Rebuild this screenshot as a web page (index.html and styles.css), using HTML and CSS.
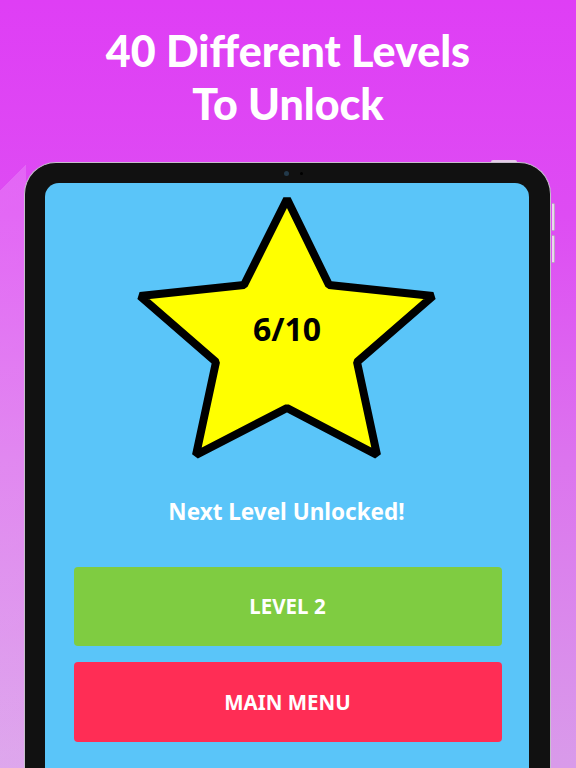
FILE: index.html
```html
<!DOCTYPE html>
<html lang="en">
<head>
    <meta charset="UTF-8">
    <meta name="viewport" content="width=device-width, initial-scale=1.0">
    <title>Levels</title>
    <link rel="stylesheet" href="styles.css">
</head>
<body>
    <h1 class="headline">40 Different Levels<br>To Unlock</h1>

    <div class="tablet">
        <span class="cam"></span>
        <span class="cam-dot"></span>
        <span class="btn-top"></span>
        <span class="btn-side one"></span>
        <span class="btn-side two"></span>

        <div class="screen">
            <svg class="star" width="310" height="275" viewBox="0 0 310 275">
                <polygon points="154,10 196,96 300,107 224,173 244,266 154,219 63,266 83,173 7,107 111,96"
                         fill="#ffff00" stroke="#000" stroke-width="8" stroke-linejoin="bevel"/>
                <text x="154" y="152" text-anchor="middle" class="score">6/10</text>
            </svg>

            <p class="unlocked">Next Level Unlocked!</p>

            <div class="actions">
                <button class="btn green">LEVEL 2</button>
                <button class="btn red">MAIN MENU</button>
            </div>
        </div>
    </div>
</body>
</html>
```

FILE: styles.css
```css
html, body{
    height: 100%;
    overflow: hidden;
}
body{
    margin: 0;
    background:
        linear-gradient(135deg, transparent 24%, rgba(255,255,255,0.16) 24%, rgba(255,255,255,0.12) 100%) left top / 26px 100% no-repeat,
        linear-gradient(180deg, #df3ef5 0%, #de4cf3 28%, #dc74ee 60%, #d99bea 100%);
    font-family: "Noto Sans", "Open Sans", sans-serif;
}
.headline{
    margin: 0;
    padding-top: 24px;
    text-align: center;
    color: #fff;
    font-family: "Lato", sans-serif;
    font-weight: 900;
    font-size: 43px;
    line-height: 53px;
}

/* device frame */
.tablet{
    position: relative;
    box-sizing: border-box;
    width: 527px;
    height: 620px;
    margin: 32px 0 0 24px;
    padding: 19.5px 21.5px 0 19.5px;
    background: #111;
    border: 1.5px solid #c6bfcc;
    border-bottom: none;
    border-radius: 32px 32px 0 0;
}
.cam{
    position: absolute;
    top: 8px;
    left: 259px;
    width: 5px;
    height: 5px;
    border-radius: 50%;
    background: #22394a;
}
.cam-dot{
    position: absolute;
    top: 9px;
    left: 275px;
    width: 3px;
    height: 3px;
    border-radius: 50%;
    background: #000;
}
.btn-top{
    position: absolute;
    top: -3.5px;
    left: 466px;
    width: 26px;
    height: 2px;
    background: #e6cbe9;
    border-radius: 2px 2px 0 0;
}
.btn-side{
    position: absolute;
    right: -4.5px;
    width: 2px;
    background: #ecd6ef;
    border: 1px solid #b7aebd;
    border-left: none;
    border-radius: 0 2px 2px 0;
}
.btn-side.one{
    top: 40px;
    height: 26px;
}
.btn-side.two{
    top: 72px;
    height: 26px;
}

.screen{
    height: 100%;
    box-sizing: border-box;
    padding-top: 6px;
    background: #5ac5f9;
    border-radius: 14px 14px 0 0;
    display: flex;
    flex-direction: column;
    align-items: center;
}
.star{
    display: block;
    margin-left: 2px;
}
.score{
    font-family: "Noto Sans", sans-serif;
    font-weight: 700;
    font-size: 32px;
    fill: #000;
}
.unlocked{
    margin: 33px 0 0;
    color: #fff;
    font-weight: 700;
    font-size: 22.5px;
    line-height: 30px;
}
.actions{
    align-self: stretch;
    margin: 40px 27px 0 29px;
    display: flex;
    flex-direction: column;
    gap: 16px;
}
.btn{
    height: 80px;
    border: none;
    border-radius: 4px;
    color: #fff;
    font-family: "Noto Sans", sans-serif;
    font-weight: 700;
    font-size: 20.5px;
}
.green{
    height: 79px;
    background: #7fcc41;
}
.red{
    background: #ff2d55;
}
```
